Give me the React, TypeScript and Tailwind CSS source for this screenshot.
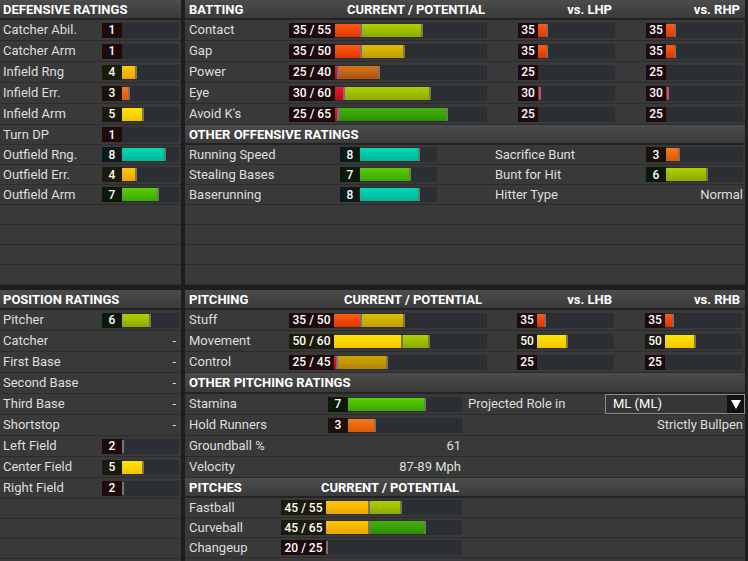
type Seg = { w: number; c: string };
type Rating = { t: string; box: string; segs: Seg[] };

// fill gradients, top to bottom
const C = {
  red: 'bg-linear-to-b from-[#f0182c] to-[#c00818]',
  ro: 'bg-linear-to-b from-[#ff5a12] to-[#e03400]',
  orange: 'bg-linear-to-b from-[#f57a1a] to-[#dc5806]',
  brown: 'bg-linear-to-b from-[#d4761e] to-[#b0520c]',
  gold: 'bg-linear-to-b from-[#ffc800] to-[#eca400]',
  yellow: 'bg-linear-to-b from-[#ffe600] to-[#f2c400]',
  olive: 'bg-linear-to-b from-[#dcc000] to-[#c29c00]',
  ochre: 'bg-linear-to-b from-[#d0a400] to-[#b48600]',
  lime: 'bg-linear-to-b from-[#b0d000] to-[#8aaa00]',
  green: 'bg-linear-to-b from-[#5ccc08] to-[#3aa800]',
  dgreen: 'bg-linear-to-b from-[#46b010] to-[#2c9000]',
  teal: 'bg-linear-to-b from-[#00d8b6] to-[#00b898]',
};

const BX = {
  red: 'bg-[#1e090d]',
  org: 'bg-[#1d1008]',
  yel: 'bg-[#1c1a08]',
  grn: 'bg-[#0d1908]',
  teal: 'bg-[#071b19]',
};

const one = (v: number): Rating => {
  const t = String(v);
  switch (v) {
    case 2: return { t, box: BX.red, segs: [{ w: 2, c: C.red }] };
    case 3: return { t, box: BX.org, segs: [{ w: 8, c: C.orange }] };
    case 4: return { t, box: BX.yel, segs: [{ w: 15, c: C.gold }] };
    case 5: return { t, box: BX.yel, segs: [{ w: 22, c: C.yellow }] };
    case 6: return { t, box: BX.grn, segs: [{ w: 29, c: C.lime }] };
    case 7: return { t, box: BX.grn, segs: [{ w: 37, c: C.green }] };
    case 8: return { t, box: BX.teal, segs: [{ w: 44, c: C.teal }] };
    default: return { t, box: BX.red, segs: [] };
  }
};

function Bar({ size, boxW, r }: { size: string; boxW: string; r: Rating }) {
  return (
    <div className={`flex h-[15px] shrink-0 bg-[#2b2f34] bg-[image:repeating-linear-gradient(90deg,#2a2e33_0px,#2a2e33_3px,#2e3237_3px,#2e3237_4px)] ${size}`}>
      <div className={`flex h-full items-center justify-center text-[12px] font-medium text-white ${boxW} ${r.box}`}>
        {r.t}
      </div>
      <div className="flex h-full items-center">
        {r.segs.map((s, i) => (
          <div
            key={i}
            className={`h-[13px] border-r-2 border-[#747474] ${s.c}`}
            style={{ width: s.w }}
          />
        ))}
      </div>
    </div>
  );
}

function Header({ children, className = '' }: { children: React.ReactNode; className?: string }) {
  return (
    <div className={`flex h-[20px] shrink-0 items-center border-b-2 border-[#232323] bg-linear-to-b from-[#4c4c4c] to-[#3a3a3a] pt-px text-[13px] font-bold text-white ${className}`}>
      {children}
    </div>
  );
}

function Row({ h = 'h-[21px]', className = '', children }: { h?: string; className?: string; children?: React.ReactNode }) {
  return (
    <div className={`flex shrink-0 items-center border-b border-[#2c2c2c] text-[13px] text-[#dedede] ${h} ${className}`}>
      {children}
    </div>
  );
}

const defensive: [string, number, string][] = [
  ['Catcher Abil.', 1, 'h-[21px]'],
  ['Catcher Arm', 1, 'h-[21px]'],
  ['Infield Rng', 4, 'h-[21px]'],
  ['Infield Err.', 3, 'h-[21px]'],
  ['Infield Arm', 5, 'h-[21px]'],
  ['Turn DP', 1, 'h-[20px]'],
  ['Outfield Rng.', 8, 'h-[20px]'],
  ['Outfield Err.', 4, 'h-[20px]'],
  ['Outfield Arm', 7, 'h-[20px]'],
];

const positions: [string, number | null][] = [
  ['Pitcher', 6],
  ['Catcher', null],
  ['First Base', null],
  ['Second Base', null],
  ['Third Base', null],
  ['Shortstop', null],
  ['Left Field', 2],
  ['Center Field', 5],
  ['Right Field', 2],
];

const r35: Rating = { t: '35', box: BX.red, segs: [{ w: 10, c: C.ro }] };
const r30: Rating = { t: '30', box: BX.red, segs: [{ w: 3, c: C.red }] };
const r25: Rating = { t: '25', box: BX.red, segs: [] };

const batting: { l: string; r: Rating; lhp: Rating; rhp: Rating }[] = [
  { l: 'Contact', r: { t: '35 / 55', box: BX.red, segs: [{ w: 27, c: C.ro }, { w: 61, c: C.lime }] }, lhp: r35, rhp: r35 },
  { l: 'Gap', r: { t: '35 / 50', box: BX.red, segs: [{ w: 27, c: C.ro }, { w: 43, c: C.olive }] }, lhp: r35, rhp: r35 },
  { l: 'Power', r: { t: '25 / 40', box: BX.red, segs: [{ w: 4, c: C.red }, { w: 41, c: C.brown }] }, lhp: r25, rhp: r25 },
  { l: 'Eye', r: { t: '30 / 60', box: BX.red, segs: [{ w: 10, c: C.red }, { w: 86, c: C.lime }] }, lhp: r30, rhp: r30 },
  { l: "Avoid K's", r: { t: '25 / 65', box: BX.red, segs: [{ w: 4, c: C.red }, { w: 109, c: C.dgreen }] }, lhp: r25, rhp: r25 },
];

const s35: Rating = { t: '35', box: BX.red, segs: [{ w: 9, c: C.ro }] };
const s50: Rating = { t: '50', box: BX.yel, segs: [{ w: 31, c: C.yellow }] };

const pitching: { l: string; r: Rating; lhb: Rating }[] = [
  { l: 'Stuff', r: { t: '35 / 50', box: BX.red, segs: [{ w: 28, c: C.ro }, { w: 43, c: C.olive }] }, lhb: s35 },
  { l: 'Movement', r: { t: '50 / 60', box: BX.yel, segs: [{ w: 69, c: C.yellow }, { w: 27, c: C.lime }] }, lhb: s50 },
  { l: 'Control', r: { t: '25 / 45', box: BX.red, segs: [{ w: 4, c: C.red }, { w: 50, c: C.ochre }] }, lhb: r25 },
];

const pitches: [string, Rating][] = [
  ['Fastball', { t: '45 / 55', box: BX.yel, segs: [{ w: 44, c: C.gold }, { w: 32, c: C.lime }] }],
  ['Curveball', { t: '45 / 65', box: BX.yel, segs: [{ w: 44, c: C.gold }, { w: 56, c: C.dgreen }] }],
  ['Changeup', { t: '20 / 25', box: BX.red, segs: [{ w: 2, c: C.red }] }],
];

export default function App() {
  return (
    <div className="flex h-[561px] w-[748px] flex-col gap-[5px] overflow-hidden bg-[#1e1e1e] font-['Roboto','Liberation_Sans',sans-serif]">
      {/* top half */}
      <div className="flex h-[285px] shrink-0 gap-[4px]">
        <div className="flex w-[181px] flex-col bg-[#393939]">
          <Header className="pl-[3px]">DEFENSIVE RATINGS</Header>
          {defensive.map(([l, v, h]) => (
            <Row key={l} h={h} className="pl-[3px]">
              <span className="w-[99px]">{l}</span>
              <Bar size="w-[77px]" boxW="w-[20px]" r={one(v)} />
            </Row>
          ))}
          {[0, 1, 2, 3].map((i) => (
            <Row key={i} h="h-[20px]" />
          ))}
        </div>

        <div className="flex w-[560px] flex-col bg-[#393939]">
          <Header className="pl-[4px]">
            <span className="w-[100px]">BATTING</span>
            <span className="w-[198px] pr-[2px] text-right">CURRENT / POTENTIAL</span>
            <span className="w-[128px] pr-[3px] text-right">vs. LHP</span>
            <span className="w-[128px] pr-[3px] text-right">vs. RHP</span>
          </Header>
          {batting.map((b) => (
            <Row key={b.l} className="pl-[4px]">
              <span className="w-[100px]">{b.l}</span>
              <Bar size="w-[198px]" boxW="w-[46px]" r={b.r} />
              <div className="w-[31px]" />
              <Bar size="w-[97px]" boxW="w-[20px]" r={b.lhp} />
              <div className="w-[31px]" />
              <Bar size="w-[97px]" boxW="w-[20px]" r={b.rhp} />
            </Row>
          ))}
          <Header className="pl-[4px]">OTHER OFFENSIVE RATINGS</Header>
          {[
            ['Running Speed', { t: '8', box: BX.teal, segs: [{ w: 60, c: C.teal }] }, 'Sacrifice Bunt', { t: '3', box: BX.org, segs: [{ w: 14, c: C.orange }] }],
            ['Stealing Bases', { t: '7', box: BX.grn, segs: [{ w: 51, c: C.green }] }, 'Bunt for Hit', { t: '6', box: BX.grn, segs: [{ w: 42, c: C.lime }] }],
          ].map(([a, ra, b, rb]) => (
            <Row key={a as string} h="h-[20px]" className="pl-[4px]">
              <span className="w-[151px]">{a as string}</span>
              <Bar size="w-[97px]" boxW="w-[20px]" r={ra as Rating} />
              <span className="ml-[58px] w-[151px]">{b as string}</span>
              <Bar size="w-[97px]" boxW="w-[20px]" r={rb as Rating} />
            </Row>
          ))}
          <Row h="h-[20px]" className="pl-[4px]">
            <span className="w-[151px]">Baserunning</span>
            <Bar size="w-[97px]" boxW="w-[20px]" r={{ t: '8', box: BX.teal, segs: [{ w: 60, c: C.teal }] }} />
            <span className="ml-[58px] w-[151px]">Hitter Type</span>
            <span className="w-[97px] text-right">Normal</span>
          </Row>
          {[0, 1, 2, 3].map((i) => (
            <Row key={i} h="h-[20px]" />
          ))}
        </div>
      </div>

      {/* bottom half */}
      <div className="flex h-[271px] shrink-0 gap-[4px]">
        <div className="flex w-[181px] flex-col bg-[#393939]">
          <Header className="pl-[3px]">POSITION RATINGS</Header>
          {positions.map(([l, v]) => (
            <Row key={l} className="pl-[3px]">
              <span className="w-[99px]">{l}</span>
              {v === null ? (
                <span className="w-[77px] pr-[3px] text-right">-</span>
              ) : (
                <Bar size="w-[77px]" boxW="w-[20px]" r={one(v)} />
              )}
            </Row>
          ))}
          {[0, 1, 2].map((i) => (
            <Row key={i} h="h-[20px]" />
          ))}
        </div>

        <div className="flex w-[560px] flex-col bg-[#393939]">
          <Header className="pl-[4px]">
            <span className="w-[100px]">PITCHING</span>
            <span className="w-[198px] pr-[5px] text-right">CURRENT / POTENTIAL</span>
            <span className="w-[128px] pr-[3px] text-right">vs. LHB</span>
            <span className="w-[128px] pr-[3px] text-right">vs. RHB</span>
          </Header>
          {pitching.map((p) => (
            <Row key={p.l} className="pl-[4px]">
              <span className="w-[100px]">{p.l}</span>
              <Bar size="w-[198px]" boxW="w-[45px]" r={p.r} />
              <div className="w-[30px]" />
              <Bar size="w-[97px]" boxW="w-[20px]" r={p.lhb} />
              <div className="w-[31px]" />
              <Bar size="w-[97px]" boxW="w-[20px]" r={p.lhb} />
            </Row>
          ))}
          <Header className="h-[21px] pl-[4px]">OTHER PITCHING RATINGS</Header>
          <Row className="pl-[4px]">
            <span className="w-[139px]">Stamina</span>
            <Bar size="w-[134px]" boxW="w-[20px]" r={{ t: '7', box: BX.grn, segs: [{ w: 78, c: C.green }] }} />
            <span className="ml-[6px] w-[137px]">Projected Role in</span>
            <div className="flex h-[20px] w-[140px] items-center border border-[#8c8c8c] bg-[#363636]">
              <span className="flex-1 pl-[7px] text-white">ML (ML)</span>
              <div className="flex h-full w-[17px] items-center justify-center bg-[#111111]">
                <svg width="10" height="9" viewBox="0 0 10 9">
                  <polygon points="0,0 10,0 5,9" fill="#ffffff" />
                </svg>
              </div>
            </div>
          </Row>
          <Row className="pl-[4px]">
            <span className="w-[139px]">Hold Runners</span>
            <Bar size="w-[134px]" boxW="w-[20px]" r={{ t: '3', box: BX.org, segs: [{ w: 28, c: C.orange }] }} />
            <span className="flex-1 pr-[2px] text-right">Strictly Bullpen</span>
          </Row>
          <Row className="pl-[4px]">
            <span className="w-[139px]">Groundball %</span>
            <span className="w-[134px] pr-[1px] text-right">61</span>
          </Row>
          <Row className="pl-[4px]">
            <span className="w-[139px]">Velocity</span>
            <span className="w-[134px] pr-[1px] text-right">87-89 Mph</span>
          </Row>
          <Header className="pl-[4px]">
            <span className="w-[92px]">PITCHES</span>
            <span className="w-[181px] pr-[3px] text-right">CURRENT / POTENTIAL</span>
          </Header>
          {pitches.map(([l, r]) => (
            <Row key={l} h="h-[20px]" className="pl-[4px]">
              <span className="w-[92px]">{l}</span>
              <Bar size="w-[181px]" boxW="w-[45px]" r={r} />
            </Row>
          ))}
        </div>
      </div>
    </div>
  );
}
